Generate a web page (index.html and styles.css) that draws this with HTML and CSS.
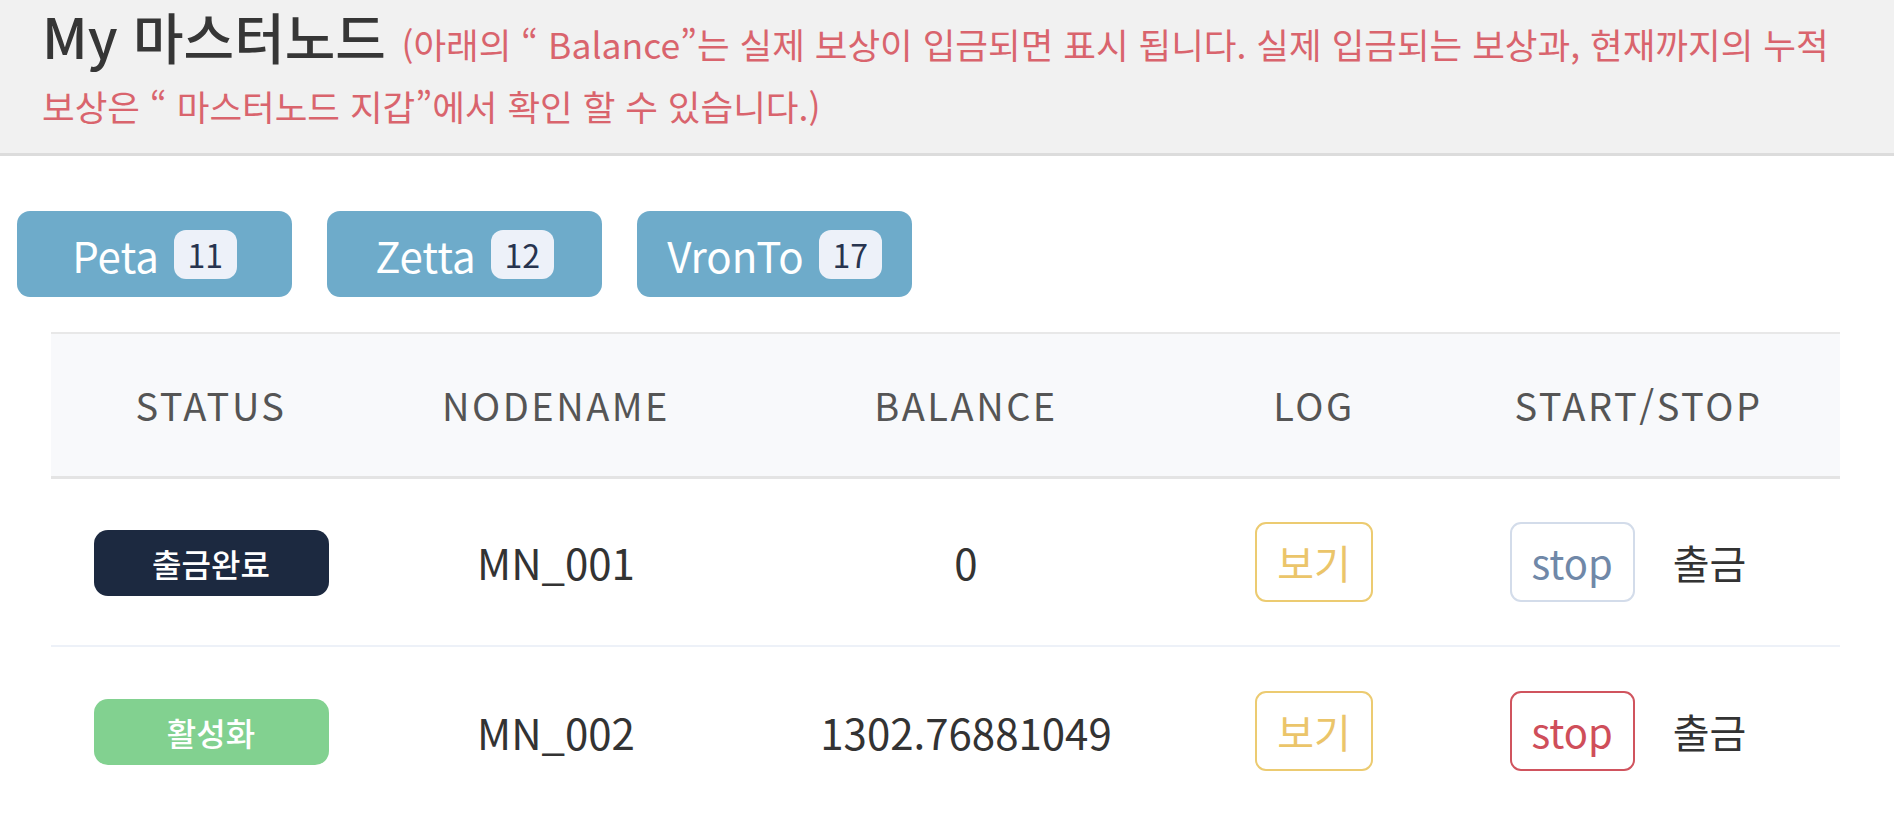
FILE: index.html
```html
<!DOCTYPE html>
<html lang="ko">
<head>
<meta charset="utf-8">
<title>My 마스터노드</title>
<link rel="stylesheet" href="styles.css">
</head>
<body>
<header class="page-header">
  <h1 class="title"><span class="title-main">My 마스터노드</span> <span class="title-note">(아래의 “ Balance”는 실제 보상이 입금되면 표시 됩니다. 실제 입금되는 보상과, 현재까지의 누적 보상은 “ 마스터노드 지갑”에서 확인 할 수 있습니다.)</span></h1>
</header>
<main class="content">
  <nav class="tabs">
    <button class="tab">Peta <span class="tab-count">11</span></button>
    <button class="tab">Zetta <span class="tab-count">12</span></button>
    <button class="tab">VronTo <span class="tab-count">17</span></button>
  </nav>
  <div class="table-wrap">
    <table class="nodes">
      <colgroup>
        <col class="c-status"><col class="c-name"><col class="c-balance"><col class="c-log"><col class="c-action">
      </colgroup>
      <thead>
        <tr><th>STATUS</th><th>NODENAME</th><th>BALANCE</th><th>LOG</th><th>START/STOP</th></tr>
      </thead>
      <tbody>
        <tr>
          <td><span class="status status-done">출금완료</span></td>
          <td>MN_001</td>
          <td>0</td>
          <td><span class="btn btn-log">보기</span></td>
          <td class="action-cell"><div class="actions"><span class="btn btn-stop btn-stop-muted">stop</span><span class="withdraw">출금</span></div></td>
        </tr>
        <tr>
          <td><span class="status status-active">활성화</span></td>
          <td>MN_002</td>
          <td>1302.76881049</td>
          <td><span class="btn btn-log">보기</span></td>
          <td class="action-cell"><div class="actions"><span class="btn btn-stop btn-stop-danger">stop</span><span class="withdraw">출금</span></div></td>
        </tr>
      </tbody>
    </table>
  </div>
</main>
</body>
</html>
```

FILE: styles.css
```css
* { box-sizing: border-box; }

html, body {
  margin: 0;
  padding: 0;
  background: #ffffff;
}

body {
  font-family: "Noto Sans CJK KR", "Noto Sans", sans-serif;
  color: #333333;
  overflow: hidden;
}

.page-header {
  background: #f1f1f1;
  border-bottom: 3px solid #dcdcdc;
  padding: 4px 40px 25px 42px;
}

.title {
  margin: 0;
  font-size: 55px;
  line-height: 62px;
  font-weight: 400;
}

.title-main {
  color: #363636;
  font-size: 55px;
  font-weight: 500;
  line-height: 62px;
}

.title-note {
  color: #d9646d;
  font-size: 35.5px;
  line-height: 40px;
}

.content {
  padding: 55px 54px 0 17px;
}

.tabs {
  display: flex;
  gap: 35px;
}

.tab {
  width: 275px;
  height: 86px;
  border: 0;
  border-radius: 13px;
  background: #6eabca;
  color: #ffffff;
  font-family: inherit;
  font-size: 42px;
  display: flex;
  align-items: center;
  justify-content: center;
  gap: 15px;
  padding: 0;
}

.tab-count {
  display: inline-flex;
  align-items: center;
  justify-content: center;
  min-width: 63px;
  height: 49px;
  padding: 0 12px;
  border-radius: 12px;
  background: #edf1f9;
  color: #27344f;
  font-size: 32px;
}

.table-wrap {
  margin: 35px 0 0 34px;
}

.nodes {
  width: 1789px;
  border-collapse: collapse;
  table-layout: fixed;
}

.c-status { width: 320px; }
.c-name { width: 370px; }
.c-balance { width: 450px; }
.c-log { width: 246px; }
.c-action { width: 403px; }

.nodes thead tr {
  background: #f8f9fb;
  border-top: 2px solid #e8e8e8;
  border-bottom: 3px solid #e4e4e4;
}

.nodes th {
  height: 144px;
  padding: 0;
  font-size: 38px;
  font-weight: 400;
  letter-spacing: 2.5px;
  color: #555555;
  text-align: center;
  vertical-align: middle;
}

.nodes td {
  height: 169px;
  padding: 0;
  font-size: 42px;
  color: #333333;
  text-align: center;
  vertical-align: middle;
}

.nodes tbody tr + tr {
  border-top: 2px solid #edf1f8;
}

.status {
  display: inline-flex;
  align-items: center;
  justify-content: center;
  width: 235px;
  height: 66px;
  border-radius: 14px;
  color: #ffffff;
  font-size: 32px;
  font-weight: 500;
}

.status-done { background: #1c2940; }
.status-active { background: #82d190; }

.btn {
  display: inline-flex;
  align-items: center;
  justify-content: center;
  height: 80px;
  border: 2px solid;
  border-radius: 11px;
  font-size: 40px;
  background: #ffffff;
}

.btn-log {
  width: 118px;
  border-color: #eccb71;
  color: #ebc56a;
}

.btn-stop { width: 125px; }

.btn-stop-muted {
  border-color: #d3dcea;
  color: #7088a8;
}

.btn-stop-danger {
  border-color: #d0545e;
  color: #cf4e5a;
}

.action-cell { padding-right: 21px !important; }

.actions {
  display: flex;
  align-items: center;
  justify-content: center;
  gap: 38px;
}

.withdraw {
  font-size: 40px;
  color: #333333;
}
```
